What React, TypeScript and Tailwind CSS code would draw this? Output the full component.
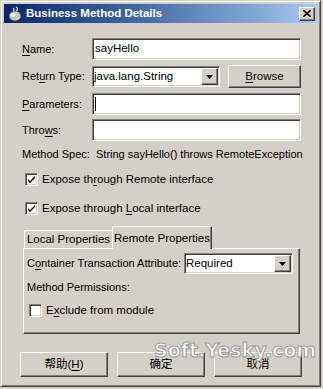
import { ReactNode } from 'react';

const FONT = { fontFamily: '"Liberation Sans", "Noto Sans CJK SC", Arial, sans-serif' };

const sunken =
  'bg-white border border-t-[#808080] border-l-[#808080] border-b-white border-r-white shadow-[inset_1px_1px_0_#404040,inset_-1px_-1px_0_#d4d0c8]';
const raised =
  'bg-[#d4d0c8] border border-t-white border-l-white border-b-[#404040] border-r-[#404040] shadow-[inset_-1px_-1px_0_#808080]';

function U({ children }: { children: ReactNode }) {
  return <span className="underline underline-offset-2 decoration-1">{children}</span>;
}

function Label({ children }: { children: ReactNode }) {
  return <div className="w-[70px] shrink-0 text-black whitespace-nowrap">{children}</div>;
}

function DropArrow() {
  return (
    <div className={`${raised} w-[17px] h-[17px] flex items-center justify-center shrink-0`}>
      <svg width="7" height="4" viewBox="0 0 7 4">
        <path d="M0 0h7L3.5 4z" fill="#000" />
      </svg>
    </div>
  );
}

function Check({ checked }: { checked: boolean }) {
  return (
    <div className={`${sunken} w-[13px] h-[13px] flex items-center justify-center shrink-0`}>
      {checked && (
        <svg width="7" height="7" viewBox="0 0 7 7">
          <path d="M0 3l2 2 5-5v2L2 7 0 5z" fill="#000" />
        </svg>
      )}
    </div>
  );
}

function Btn({ children, className = '' }: { children: ReactNode; className?: string }) {
  return (
    <div className={`${raised} flex items-center justify-center text-[11.5px] text-black whitespace-nowrap ${className}`}>
      {children}
    </div>
  );
}

export default function App() {
  return (
    <div style={FONT} className="relative w-[323px] h-[389px] bg-[#d4d0c8] overflow-hidden">
      <div className="w-[321px] h-[387px] border border-t-[#d4d0c8] border-l-[#d4d0c8] border-r-[#404040] border-b-[#404040] shadow-[inset_1px_1px_0_#fff,inset_-1px_-1px_0_#808080] p-[3px] flex flex-col">
        {/* title bar */}
        <div className="h-[19px] bg-gradient-to-r from-[#0a246a] to-[#a6caf0] flex items-center pl-[3px] pr-[2px]">
          <svg width="16" height="16" viewBox="0 0 16 16" className="shrink-0">
            <ellipse cx="8" cy="10" rx="6" ry="5" fill="#c8c8c8" stroke="#404040" strokeWidth="0.8" />
            <ellipse cx="6" cy="9" rx="2.5" ry="2" fill="#fff" />
            <path d="M9 1c2 1 2 3 0 4" stroke="#e0e0e0" strokeWidth="1.2" fill="none" />
            <path d="M6 2c1.5 1 1.5 2 0 3" stroke="#e0e0e0" strokeWidth="1.2" fill="none" />
          </svg>
          <div className="ml-[3px] text-white font-bold text-[11.5px] whitespace-nowrap">Business Method Details</div>
          <div className="flex-1" />
          <div className={`${raised} w-[16px] h-[14px] flex items-center justify-center`}>
            <svg width="8" height="7" viewBox="0 0 8 7">
              <path d="M0 0l8 7M8 0L0 7" stroke="#000" strokeWidth="1.6" />
            </svg>
          </div>
        </div>

        {/* form */}
        <div className="pl-[18px] pr-[16px] pt-[15px] flex flex-col text-[11px] whitespace-nowrap">
          <div className="flex items-center h-[22px]">
            <Label>
              <U>N</U>ame:
            </Label>
            <div className={`${sunken} flex-1 h-[22px] flex items-center pl-[2px] text-[11.5px]`}>sayHello</div>
          </div>

          <div className="flex items-center h-[23px] mt-[5px]">
            <Label>
              Ret<U>u</U>rn Type:
            </Label>
            <div className={`${sunken} w-[128px] h-[21px] flex items-center pl-[1px] pr-[1px] text-[11.5px]`}>
              <div className="flex-1">java.lang.String</div>
              <DropArrow />
            </div>
            <div className="flex-1" />
            <Btn className="w-[73px] h-[23px]">
              <U>B</U>rowse
            </Btn>
          </div>

          <div className="flex items-center h-[22px] mt-[5px]">
            <Label>
              <U>P</U>arameters:
            </Label>
            <div className={`${sunken} flex-1 h-[22px] flex items-center pl-[2px]`}>
              <div className="w-[1px] h-[14px] bg-black" />
            </div>
          </div>

          <div className="flex items-center h-[22px] mt-[4px]">
            <Label>
              Thro<U>w</U>s:
            </Label>
            <div className={`${sunken} flex-1 h-[22px]`} />
          </div>

          <div className="mt-[6px] h-[15px] leading-[15px]">
            Method Spec:&nbsp; String sayHello() throws RemoteException
          </div>

          <div className="flex items-center gap-[4px] mt-[10px] ml-[3px] h-[15px] text-[11.5px]">
            <Check checked />
            <span>
              Expose th<U>r</U>ough Remote interface
            </span>
          </div>

          <div className="flex items-center gap-[4px] mt-[14px] ml-[3px] h-[15px] text-[11.5px]">
            <Check checked />
            <span>
              Expose through <U>L</U>ocal interface
            </span>
          </div>

          {/* tabs */}
          <div className="mt-[10px] ml-[2px] flex items-end h-[22px] relative z-10 text-[11.5px]">
            <div className="w-[88px] h-[19px] flex items-center justify-center border-t border-l border-t-white border-l-white mb-[-1px]">
              Local Properties
            </div>
            <div className="w-[100px] h-[23px] flex items-start justify-center pt-[3px] bg-[#d4d0c8] border-t border-l border-r border-t-white border-l-white border-r-[#404040] shadow-[inset_-1px_0_0_#808080] mb-[-1px]">
              Remote Properties
            </div>
          </div>
          <div className="ml-[1px] mr-[1px] h-[86px] border border-t-white border-l-white border-r-[#404040] border-b-[#404040] shadow-[inset_-1px_-1px_0_#808080] pl-[3px] pr-[6px] pt-[4px] flex flex-col">
            <div className="flex items-center h-[21px]">
              <div className="w-[157px] shrink-0">
                C<U>o</U>ntainer Transaction Attribute:
              </div>
              <div className={`${sunken} flex-1 h-[21px] flex items-center pl-[1px] pr-[1px] text-[11.5px]`}>
                <div className="flex-1">Required</div>
                <DropArrow />
              </div>
            </div>
            <div className="mt-[6px] h-[15px] leading-[15px]">Method Permissions:</div>
            <div className="flex items-center gap-[4px] mt-[8px] ml-[2px] h-[15px] text-[11.5px]">
              <Check checked={false} />
              <span>
                E<U>x</U>clude from module
              </span>
            </div>
          </div>
        </div>

        <div className="flex-1" />

        {/* buttons */}
        <div className="flex items-center gap-[9px] pl-[16px] pr-[15px] mb-[6px]">
          <Btn className="w-[88px] h-[25px]">
            帮助(<U>H</U>)
          </Btn>
          <Btn className="w-[88px] h-[25px]">确定</Btn>
          <Btn className="w-[88px] h-[25px]">取消</Btn>
        </div>
      </div>

      {/* watermark */}
      <div
        className="absolute left-[154px] top-[336px] text-[19px] font-bold text-white/90 pointer-events-none"
        style={{ WebkitTextStroke: '1px #9a9a9a', fontFamily: '"DejaVu Sans", sans-serif' }}
      >
        Soft.Yesky.com
      </div>
    </div>
  );
}
